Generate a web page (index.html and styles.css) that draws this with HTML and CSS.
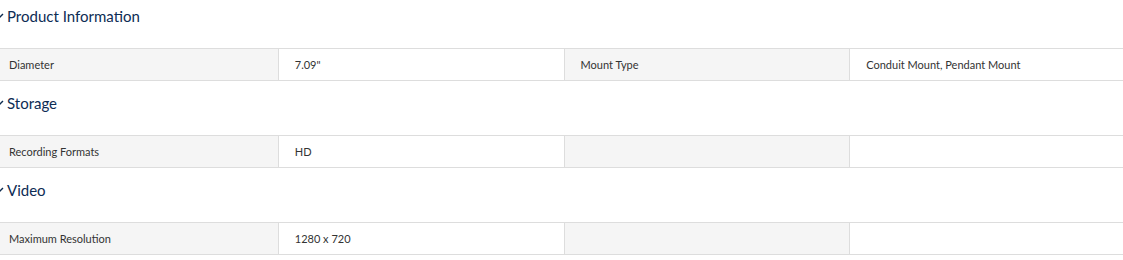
FILE: index.html
```html
<!DOCTYPE html>
<html lang="en">
<head>
    <meta charset="UTF-8">
    <meta name="viewport" content="width=device-width, initial-scale=1.0">
    <title>Specifications</title>
    <link rel="stylesheet" href="styles.css">
</head>
<body>
    <div class="specs">
        <!-- one block per spec group: heading, then a 4-column table -->
        <section class="spec-group">
            <h3 class="spec-title">
                <svg class="chevron" width="10" height="10" viewBox="0 0 10 10"><path d="M1 3 L5 7 L9 3" fill="none" stroke="#0b2a4f" stroke-width="1.4"/></svg>
                Product Information
            </h3>
            <table class="spec-table">
                <tr>
                    <td class="label">Diameter</td>
                    <td>7.09"</td>
                    <td class="label">Mount Type</td>
                    <td>Conduit Mount, Pendant Mount</td>
                </tr>
            </table>
        </section>
        <section class="spec-group">
            <h3 class="spec-title">
                <svg class="chevron" width="10" height="10" viewBox="0 0 10 10"><path d="M1 3 L5 7 L9 3" fill="none" stroke="#0b2a4f" stroke-width="1.4"/></svg>
                Storage
            </h3>
            <table class="spec-table">
                <tr>
                    <td class="label">Recording Formats</td>
                    <td>HD</td>
                    <td class="label"></td>
                    <td></td>
                </tr>
            </table>
        </section>
        <section class="spec-group">
            <h3 class="spec-title">
                <svg class="chevron" width="10" height="10" viewBox="0 0 10 10"><path d="M1 3 L5 7 L9 3" fill="none" stroke="#0b2a4f" stroke-width="1.4"/></svg>
                Video
            </h3>
            <table class="spec-table">
                <tr>
                    <td class="label">Maximum Resolution</td>
                    <td>1280 x 720</td>
                    <td class="label"></td>
                    <td></td>
                </tr>
            </table>
        </section>
    </div>
</body>
</html>
```

FILE: styles.css
```css
body {
    margin: 0;
    font-family: Lato, "Noto Sans", Arial, sans-serif;
    background-color: #fff;
    overflow: hidden;
}
.specs {
    width: 1144px;
    margin-left: -8px;
    margin-top: -6px;
}
.spec-title {
    display: flex;
    align-items: center;
    gap: 3px;
    height: 20px;
    margin: 0;
    padding: 12px 0 22px 2px;
    font-size: 15px;
    font-weight: 400;
    line-height: 20px;
    color: #0d2c54;
}
/* the toggle arrow sits mostly outside the visible edge */
.chevron {
    flex: none;
}
.spec-table {
    width: 100%;
    border-collapse: collapse;
    table-layout: fixed;
}
.spec-table td {
    height: 31px;
    padding: 0 16px;
    border: 1px solid #dddddd;
    font-size: 11px;
    color: #333;
}
.spec-table td.label {
    background-color: #f5f5f5;
}
```
